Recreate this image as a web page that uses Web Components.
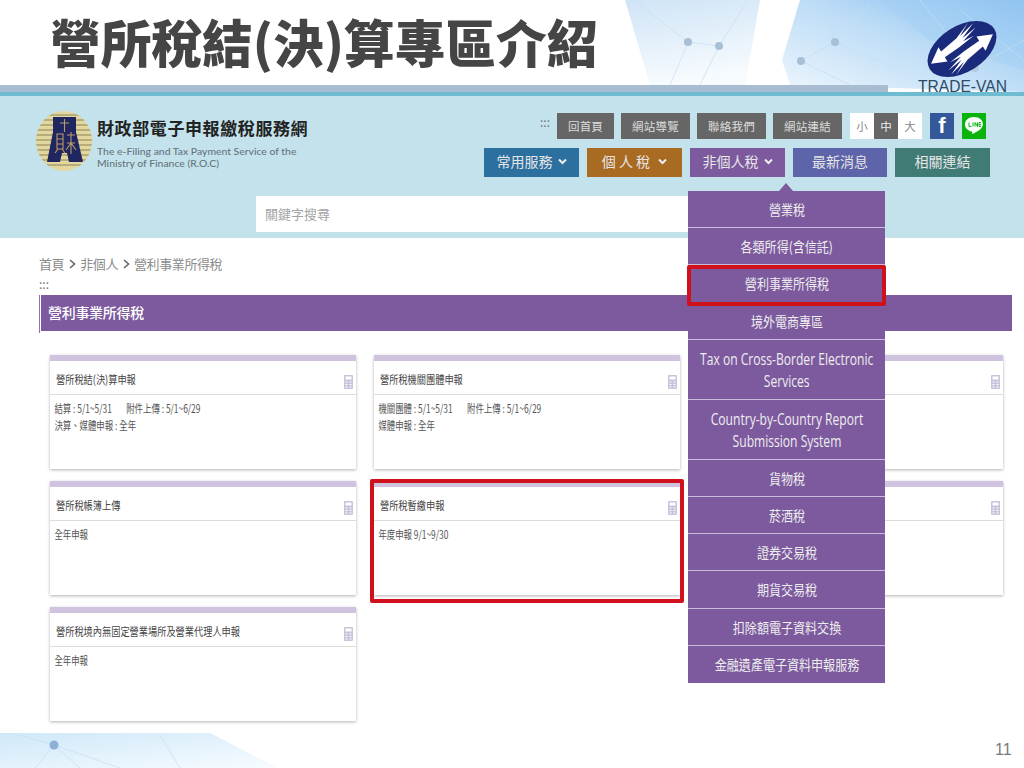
<!DOCTYPE html>
<html lang="zh-Hant"><head><meta charset="utf-8"><title>營所稅結(決)算專區介紹</title>
<style>html,body{margin:0;padding:0;background:#fff}body{font-family:"Noto Sans CJK TC","Liberation Sans",sans-serif}.g{margin-left:12px}</style>
</head><body>
<slide-page>
  <slide-title slot="title">營所稅結(決)算專區介紹</slide-title>
  <site-header slot="header"></site-header>
  <page-body slot="body">
    <svc-card title-text="營所稅結(決)算申報"><div>結算 : 5/1~5/31 &nbsp; <span class="g">附件上傳 : 5/1~6/29</span></div><div>決算、媒體申報 : 全年</div></svc-card>
    <svc-card title-text="營所稅機關團體申報"><div>機關團體 : 5/1~5/31 &nbsp; <span class="g">附件上傳 : 5/1~6/29</span></div><div>媒體申報 : 全年</div></svc-card>
    <svc-card></svc-card>
    <svc-card title-text="營所稅帳簿上傳"><div>全年申報</div></svc-card>
    <svc-card title-text="營所稅暫繳申報"><div>年度申報 9/1~9/30</div></svc-card>
    <svc-card></svc-card>
    <svc-card title-text="營所稅境內無固定營業場所及營業代理人申報"><div>全年申報</div></svc-card>
  </page-body>
  <drop-menu slot="over"></drop-menu>
</slide-page>
<script>
function def(name, html, init){
  customElements.define(name, class extends HTMLElement{
    constructor(){super();this.attachShadow({mode:'open'}).innerHTML=typeof html==='function'?html(this):html;}
    connectedCallback(){ if(init) init(this); }
  });
}
const CJK='"Noto Sans CJK TC","Liberation Sans",sans-serif';
const CHEV='<svg width="9" height="7" viewBox="0 0 9 7"><path d="M1 1.500L4.500 5L8 1.500" stroke="#eee" stroke-width="2" fill="none"/></svg>';

def('slide-page',`<style>
:host{display:block;position:relative;width:1024px;height:768px;overflow:hidden;background:#fff;font-family:${CJK}}
.deco{position:absolute;left:0;top:0}
.wrap{position:relative;display:flex;flex-direction:column}
.stripe{height:7px;width:888px;background:#a9bdd2}
.teal{height:4px;background:#6fbcd2;position:relative}
.tv{position:absolute;left:915px;top:18px}
.num{position:absolute;left:995px;top:741px;font:16px "Liberation Sans",sans-serif;color:#7a7a7a}
.red{position:absolute;border:4px solid #d0101a;box-sizing:border-box;border-radius:2px}
</style>
<svg class="deco" width="1024" height="768" viewBox="0 0 1024 768">
<defs>
<linearGradient id="a" x1="0" y1="0" x2="0.25" y2="1"><stop offset="0" stop-color="#cfe4f6"/><stop offset="1" stop-color="#f7fbfe"/></linearGradient>
<linearGradient id="b" x1="0" y1="1" x2="1" y2="0"><stop offset="0" stop-color="#eef6fd"/><stop offset=".55" stop-color="#bcdcf6"/><stop offset="1" stop-color="#7fbaf0"/></linearGradient>
<linearGradient id="c" x1="0" y1="0" x2="1" y2="1"><stop offset="0" stop-color="#cfe8f9"/><stop offset="1" stop-color="#f7fcff"/></linearGradient>
</defs>
<polygon points="625,0 760,0 745,85 650,85" fill="url(#a)"/>
<polygon points="800,0 1024,0 1024,92 790,85 782,60" fill="url(#b)"/>
<polygon points="880,0 1024,0 1024,70 930,40" fill="#a3cff3" opacity=".5"/>
<polygon points="0,733 210,733 278,768 0,768" fill="url(#c)"/>
<g stroke="#c6dcf0" stroke-width=".7" fill="none">
<path d="M688 42L640 5M688 42L719 46M719 46L745 5M719 46L700 85M688 42L670 85M835 42L801 61M835 42L870 5M835 42L900 70M801 61L850 85M835 42L825 0M960 10L1024 60M975 68L1024 40M920 0L975 68"/>
<path d="M54 745L20 735M54 745L35 768M54 745L120 768M54 745L80 768M160 735L180 768"/>
</g>
<g fill="#a9bfd6"><circle cx="688" cy="42" r="4"/><circle cx="719" cy="46" r="4"/><circle cx="835" cy="42" r="4"/><circle cx="801" cy="61" r="4"/><circle cx="975" cy="68" r="4" opacity=".6"/></g>
<circle cx="54" cy="745" r="4.5" fill="#8fafd4"/>
</svg>
<div class="wrap">
<slot name="title"></slot>
<div class="stripe"></div>
<div class="teal"></div>
<slot name="header"></slot>
<slot name="body"></slot>
</div>
<trade-logo class="tv"></trade-logo>
<div class="teal" style="position:absolute;left:0;right:0;top:92px"></div>
<slot name="over"></slot>
<div class="red" style="left:370px;top:479px;width:314px;height:124px"></div>
<div class="red" style="left:687px;top:265px;width:199px;height:41px"></div>
<div class="num">11</div>`);

def('slide-title',`<style>
:host{display:block;height:85px;box-sizing:border-box;padding-left:50px;padding-top:5px;font-size:50.700px;line-height:72px;font-weight:900;color:#454545;white-space:nowrap}
</style><slot></slot>`);

const HAND='M13 27L28 17V22L48 19L66 12L52 19L70 15L53 22L70 20L52 25L64 26L46 28L28 29V34Z';
def('trade-logo',`<style>
:host{display:block;width:100px;height:74px}
svg{display:block;position:absolute;left:0;top:0}
span{position:absolute;left:3px;top:60px;font:15.600px/18px "Liberation Sans",sans-serif;color:#2d4a66;white-space:nowrap}
</style>
<svg width="100" height="60" viewBox="0 0 100 60">
<g transform="rotate(-32 47 31)">
<ellipse cx="47" cy="31" rx="38" ry="23" fill="#1b2b7b"/>
<path d="${HAND}" fill="#fff"/>
<path d="${HAND}" fill="#fff" transform="rotate(180 47 31)"/>
</g></svg><span>TRADE-VAN</span>`);

def('site-header',`<style>
:host{display:block;height:142px;background:#c3e2ec;box-sizing:border-box;padding-top:15px}
.top{display:flex;justify-content:space-between;padding:0 34px 0 36px}
.brand{display:flex;gap:5px}
.names{padding-top:7px}
.zh{font-size:17px;line-height:20px;font-weight:700;color:#222;letter-spacing:.6px;white-space:nowrap}
.en{font:500 10.400px/12px Lato,sans-serif;color:#66757c;margin-top:7px;white-space:nowrap}
.right{display:flex;flex-direction:column;align-items:flex-end;gap:9px;padding-top:2px}
.r1{display:flex;align-items:center;margin-right:4px}
.r2{display:flex;gap:8px}
.dots{font-size:12px;color:#777;line-height:10px;margin-right:7px;margin-top:-8px;margin-left:-1px}
.b{display:flex;align-items:center;justify-content:center;height:26px;background:#666;color:#ddd;font-size:11.500px;letter-spacing:.2px;margin-right:7px}
.s{display:flex;align-items:center;justify-content:center;width:24px;height:26px;font-size:11.500px;background:#fff;color:#888}
.s.on{background:#666;color:#eee}
.soc{display:flex;align-items:center;justify-content:center;width:24px;height:26px;margin-left:8px;overflow:hidden}
.fb{background:#35589a;color:#fff;font:700 22px/26px "Liberation Sans",sans-serif}
.ln{background:#0ab30e}
.m{display:flex;align-items:center;justify-content:center;gap:5px;width:95px;height:29px;box-sizing:border-box;padding-bottom:3px;color:#e6e6e6;font-size:14px;white-space:nowrap}
.search{margin:19px 0 0 256px;width:440px;height:36px;background:#fff;color:#a3a3a3;font-size:13px;line-height:36px;padding-left:9px;box-sizing:border-box}
</style>
<div class="top">
<div class="brand">
<svg width="56" height="62" viewBox="0 0 56 62" style="margin-top:-1px">
<defs><clipPath id="ci"><ellipse cx="28" cy="31" rx="28" ry="30"/></clipPath></defs>
<g clip-path="url(#ci)"><rect width="56" height="62" fill="#e4d69f"/>
<path d="M0 5H56M0 10H56M0 15H56M0 20H56M0 25H56M0 30H56M0 35H56M0 40H56M0 45H56M0 50H56M0 55H56" stroke="#a7a071" stroke-width="1.600"/></g>
<path d="M17 7H40V22L47 52H33L31 43H26L24 52H11L17 22Z" fill="#1f2660"/>
<path d="M28.500 9V22M24 13H33M21 24H27V39H21ZM21 29H27M21 34H27M19 43L22 39M26 39L29 43M31 25H39M35 22V44M31 33H39M35 33L30 40M35 33L40 40" stroke="#bb9a68" stroke-width="1.100" fill="none"/>
</svg>
<div class="names"><div class="zh">財政部電子申報繳稅服務網</div><div class="en">The e-Filing and Tax Payment Service of the<br>Ministry of Finance (R.O.C)</div></div>
</div>
<div class="right">
<div class="r1"><span class="dots">:::</span>
<span class="b" style="width:57px">回首頁</span><span class="b" style="width:69px">網站導覽</span><span class="b" style="width:69px">聯絡我們</span><span class="b" style="width:69px;margin-right:8px">網站連結</span>
<span class="s">小</span><span class="s on">中</span><span class="s">大</span>
<span class="soc fb">f</span>
<span class="soc ln"><svg width="22" height="22" viewBox="0 0 22 22"><path d="M11 2C5.500 2 2 5.300 2 9.500C2 13.500 5.500 16 8.500 16.500C9.500 16.700 9.500 17.500 9 19C12 18 19.500 14.500 20 9.500C20 5.300 16.500 2 11 2Z" fill="#fff"/><path d="M6 7.500V11.500H8.500M10 7.500V11.500M12 11.500V7.500L14.500 11.500V7.500M18 7.500H16V11.500H18M16 9.500H18" stroke="#0ab30e" stroke-width="1" fill="none"/></svg></span>
</div>
<div class="r2">
<span class="m" style="background:#2c709f">常用服務${CHEV}</span>
<span class="m" style="background:#a96b22">個 人 稅&nbsp;${CHEV}</span>
<span class="m" style="background:#7d5a9e">非個人稅${CHEV}</span>
<span class="m" style="background:#5d64a9;width:94px">最新消息</span>
<span class="m" style="background:#417b76">相關連結</span>
</div>
</div>
</div>
<div class="search">關鍵字搜尋</div>`);

const GT='<svg width="9" height="10" viewBox="0 0 9 10"><path d="M2 1L6.500 5L2 9" stroke="#666" stroke-width="1.600" fill="none"/></svg>';
def('page-body',`<style>
:host{display:block;padding-top:17px}
.crumb{display:flex;align-items:center;gap:3.500px;padding-left:39px;height:18px;font-size:13px;letter-spacing:-.4px;color:#8b8b8b;line-height:18px}
.dots{padding-left:39px;height:14px;margin-top:5px;font-size:12px;line-height:12px;color:#777}
.bar{display:flex;margin:3px 12px 0 39px;height:38px}
.edge{width:1px;background:#8a76a4;height:38px;margin-right:1px}
.fill{flex:1;height:36px;background:#7d5a9e;color:#fff;font-size:14px;font-weight:500;line-height:34px;letter-spacing:-.3px;padding-left:7px}
.grid{display:grid;grid-template-columns:repeat(3,306px);gap:12px 17.500px;padding:22px 0 0 50px;grid-auto-rows:114px}
</style>
<div class="crumb"><span>首頁</span>${GT}<span>非個人</span>${GT}<span>營利事業所得稅</span></div>
<div class="dots">:::</div>
<div class="bar"><div class="edge"></div><div class="fill">營利事業所得稅</div></div>
<div class="grid"><slot></slot></div>`);

def('svc-card',(el)=>`<style>
:host{display:block;background:#fff;box-shadow:0 1px 3px rgba(0,0,0,.3);border-top:6px solid #cfc3df;box-sizing:border-box;color:#555}
.h{position:relative;height:34px;border-bottom:1px solid #dcdcdc;box-sizing:border-box}
.t{position:absolute;left:6px;top:9px;font-size:11.500px;line-height:18px;color:#444;white-space:nowrap;transform:scaleX(.8);transform-origin:left center}
svg{position:absolute;right:3px;top:14px}
.b{padding:5px 6px;font-size:11.500px;line-height:17px;white-space:nowrap;transform:scaleX(.73);transform-origin:left top}
</style>
<div class="h"><span class="t" id="t"></span>
<svg width="9" height="14" viewBox="0 0 9 14"><rect width="9" height="14" rx="1" fill="#c9c3dc"/><rect x="1.500" y="1.500" width="6" height="3" fill="#fff"/><path d="M1.500 7H3.500M5.500 7H7.500M1.500 9.500H3.500M5.500 9.500H7.500M1.500 12H3.500M5.500 12H7.500" stroke="#fff" stroke-width="1.200"/></svg></div>
<div class="b"><slot></slot></div>`,
(el)=>{el.shadowRoot.getElementById('t').textContent=el.getAttribute('title-text')||'';});

def('drop-menu',`<style>
:host{display:block;position:absolute;left:688px;top:191px;width:197px;background:#7d5a9e;color:#eee}
:host::before{content:"";position:absolute;left:91px;top:-8px;border:7px solid transparent;border-top:0;border-bottom:8px solid #7d5a9e}
div{display:flex;align-items:center;justify-content:center;height:37.200px;box-sizing:border-box;border-bottom:1px solid #c9bcd9;text-align:center;font-size:14px;white-space:nowrap}
div:last-child{border-bottom:0}
span{display:block;transform:scaleX(.86)}
.e{height:60px;padding-top:2px;font:16px/22px "Open Sans",sans-serif}
.e span{transform:scaleX(.755)}
</style>
<div><span>營業稅</span></div>
<div><span>各類所得(含信託)</span></div>
<div><span>營利事業所得稅</span></div>
<div><span>境外電商專區</span></div>
<div class="e"><span>Tax on Cross-Border Electronic<br>Services</span></div>
<div class="e"><span>Country-by-Country Report<br>Submission System</span></div>
<div><span>貨物稅</span></div>
<div><span>菸酒稅</span></div>
<div><span>證券交易稅</span></div>
<div><span>期貨交易稅</span></div>
<div><span>扣除額電子資料交換</span></div>
<div><span>金融遺產電子資料申報服務</span></div>`);
</script>
</body></html>
